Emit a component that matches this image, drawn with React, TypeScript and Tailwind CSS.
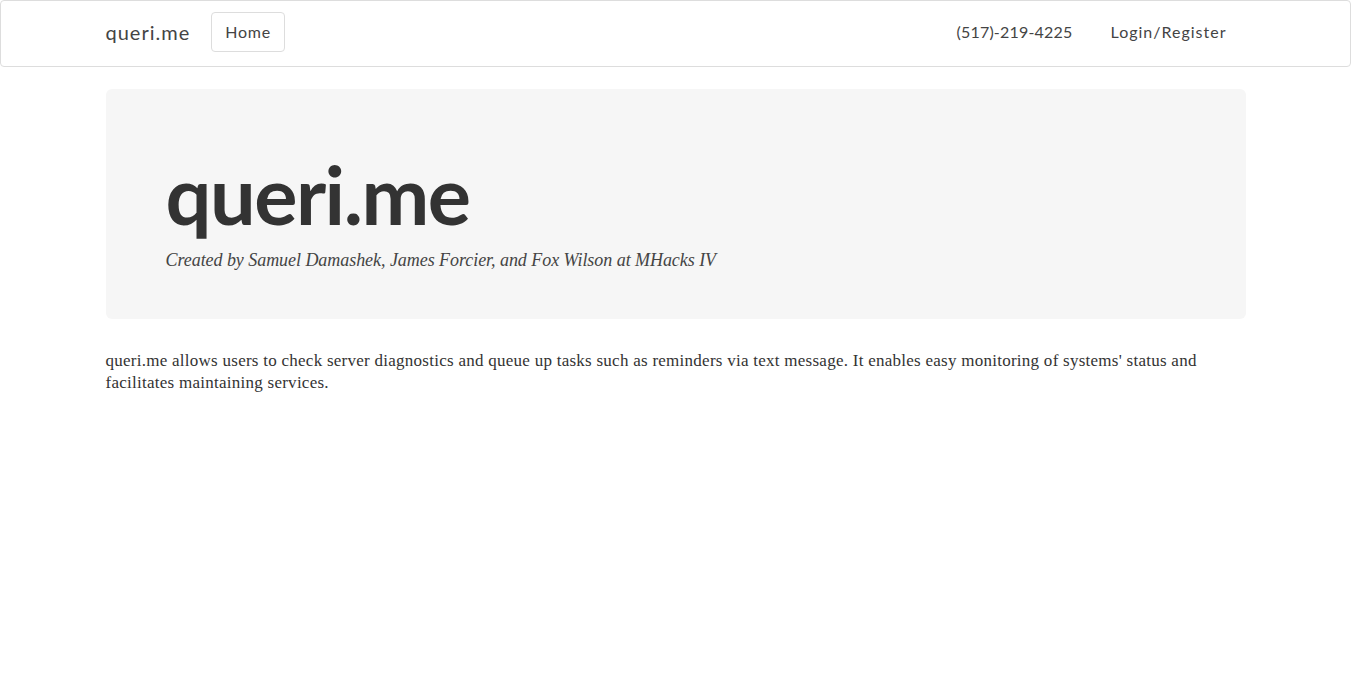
export default function App() {
  return (
    <div className="min-h-screen bg-white text-[#333]">
      {/* Navbar */}
      <nav className="h-[67px] border border-[#dddddd] rounded-[4px] bg-white">
        <div className="w-[1140px] mx-auto h-full flex items-center justify-between font-['Lato',sans-serif] pb-[3px]">
          <div className="flex items-center">
            <span className="text-[20px] text-[#444] tracking-[1px]">queri.me</span>
            <span className="ml-[21px] h-[40px] px-[13px] flex items-center border border-[#dddddd] rounded-[4px] text-[16px] text-[#444] tracking-[0.8px]">
              Home
            </span>
          </div>
          <div className="flex items-center text-[16px] text-[#444] pr-[19px]">
            <span className="tracking-[0.2px]">(517)-219-4225</span>
            <span className="ml-[38px] tracking-[1px]">Login/Register</span>
          </div>
        </div>
      </nav>

      <main className="w-[1140px] mx-auto pt-[22px]">
        {/* Jumbotron */}
        <section className="h-[230px] bg-[#f6f6f6] rounded-[6px] px-[60px] pt-[64px]">
          <h1 className="font-['Lato',sans-serif] font-bold text-[81px] leading-[1] text-[#333] tracking-[-1.5px]">
            queri.me
          </h1>
          <p className="mt-[13px] font-['Liberation_Serif',serif] italic text-[18px] text-[#444] tracking-[-0.05px]">
            Created by Samuel Damashek, James Forcier, and Fox Wilson at MHacks IV
          </p>
        </section>

        {/* About */}
        <p className="mt-[31px] font-['Liberation_Serif',serif] text-[17px] leading-[22px] tracking-[0.26px] text-[#333] pr-[40px]">
          queri.me allows users to check server diagnostics and queue up tasks such as reminders via text message. It enables easy monitoring of systems' status and facilitates maintaining services.
        </p>
      </main>
    </div>
  );
}
